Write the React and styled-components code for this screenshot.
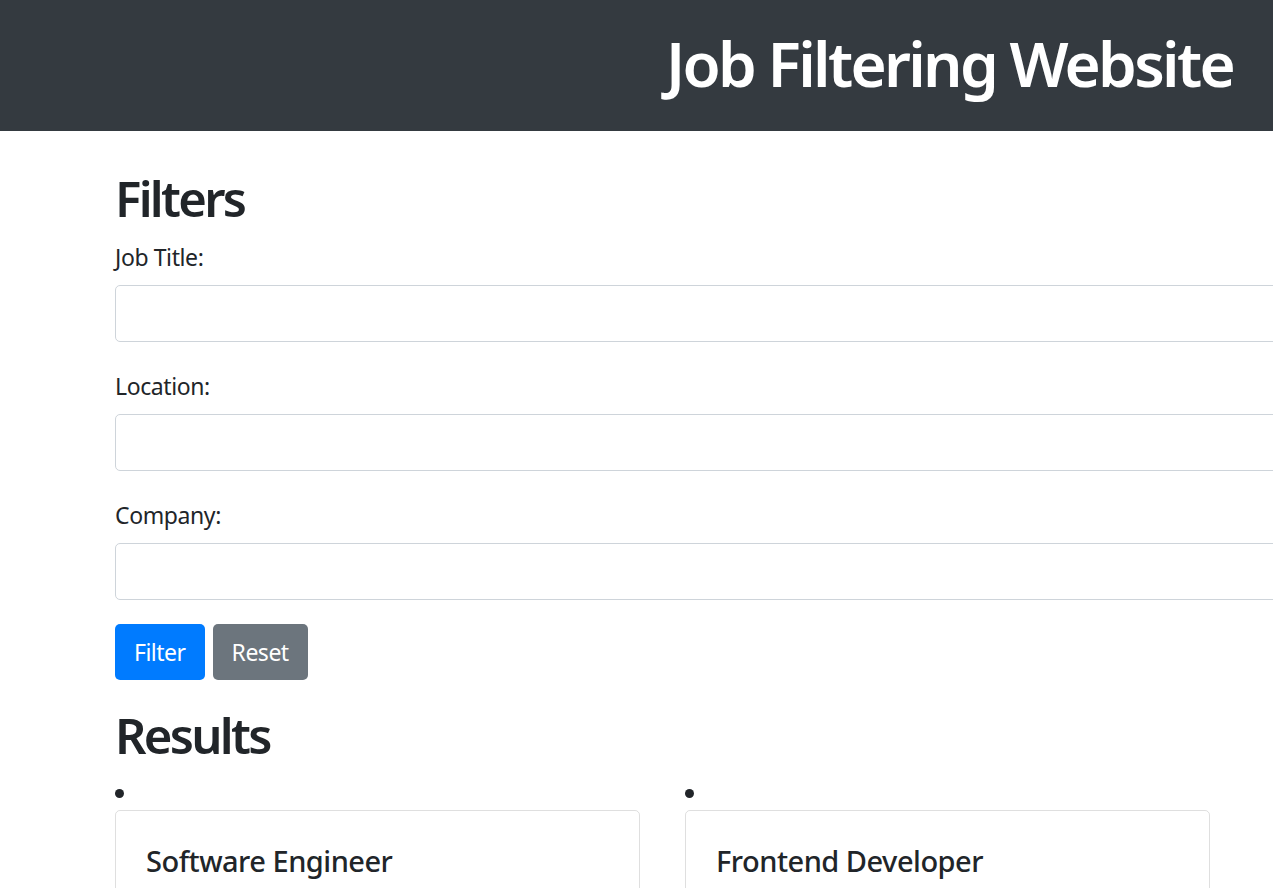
import React from 'react';
import styled, { createGlobalStyle } from 'styled-components';

const GlobalStyle = createGlobalStyle`
  body {
    margin: 0;
    background: #fff;
    color: #212529;
    font-family: "Noto Sans", "Open Sans", sans-serif;
    overflow-x: hidden;
  }
`;

const Header = styled.header`
  background: #343a40;
  height: 131px;
  display: flex;
  align-items: center;
  justify-content: flex-end;
  padding-right: 40px;
`;

const Title = styled.h1`
  margin: 0;
  color: #fff;
  font-size: 62px;
  font-weight: 600;
  letter-spacing: -2.7px;
  line-height: 1;
  padding-bottom: 6px;
`;

const Main = styled.main`
  padding: 38px 0 0 115px;
  width: 1300px;
`;

const SectionTitle = styled.h2`
  margin: 0 0 ${p => p.$gap || 11}px;
  font-size: 49px;
  font-weight: 600;
  letter-spacing: -2.7px;
  line-height: 1.2;
`;

const Field = styled.div`
  margin-bottom: 26px;
`;

const Label = styled.label`
  display: block;
  font-size: 23px;
  line-height: 36px;
  margin-bottom: 10px;
  letter-spacing: -0.4px;
`;

const Input = styled.input`
  display: block;
  box-sizing: border-box;
  width: 100%;
  height: 57px;
  border: 1px solid #ced4da;
  border-radius: 5px;
  font: inherit;
`;

const Buttons = styled.div`
  display: flex;
  gap: 8px;
  margin: -2px 0 26px;
`;

const Button = styled.button`
  height: 56px;
  padding: 0 19px;
  border: none;
  border-radius: 5px;
  color: #fff;
  background: ${p => (p.$variant === 'secondary' ? '#6c757d' : '#007bff')};
  font-family: inherit;
  font-size: 23px;
  letter-spacing: -0.5px;
`;

const Results = styled.ul`
  list-style: disc inside;
  margin: 0;
  padding: 0;
  display: grid;
  grid-template-columns: 525px 525px;
  column-gap: 45px;
  row-gap: 20px;
  line-height: 34px;
  font-size: 24px;
`;

const Card = styled.div`
  border: 1px solid rgba(0, 0, 0, 0.125);
  border-radius: 5px;
  padding: 30px 30px;
  height: 200px;
`;

const CardTitle = styled.h3`
  margin: 0;
  font-size: 29px;
  font-weight: 500;
  letter-spacing: -0.5px;
  line-height: 40px;
`;

const jobs = ['Software Engineer', 'Frontend Developer'];

export default function App() {
  return (
    <>
      <GlobalStyle />
      <Header>
        <Title>Job Filtering Website</Title>
      </Header>
      <Main>
        <SectionTitle>Filters</SectionTitle>
        <Field>
          <Label>Job Title:</Label>
          <Input type="text" />
        </Field>
        <Field>
          <Label>Location:</Label>
          <Input type="text" />
        </Field>
        <Field>
          <Label>Company:</Label>
          <Input type="text" />
        </Field>
        <Buttons>
          <Button>Filter</Button>
          <Button $variant="secondary">Reset</Button>
        </Buttons>
        <SectionTitle $gap={11}>Results</SectionTitle>
        <Results>
          {jobs.map(job => (
            <li key={job}>
              <Card>
                <CardTitle>{job}</CardTitle>
              </Card>
            </li>
          ))}
        </Results>
      </Main>
    </>
  );
}
